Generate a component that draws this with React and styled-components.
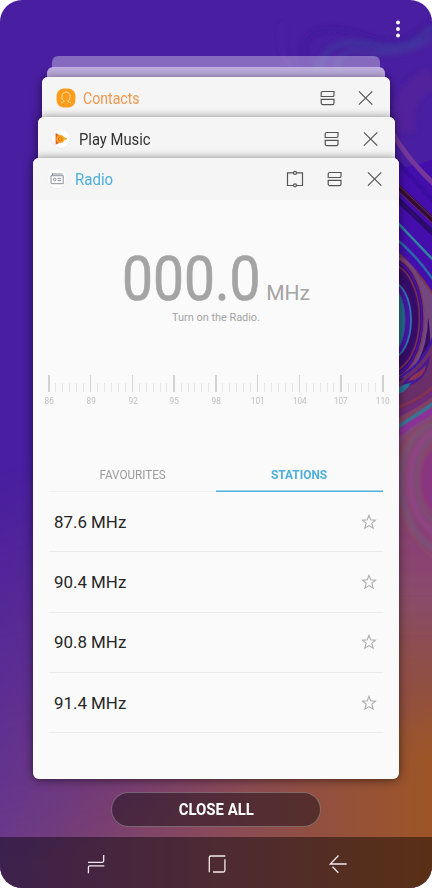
import React from "react";
import styled, { createGlobalStyle } from "styled-components";

const stations = ["87.6 MHz", "90.4 MHz", "90.8 MHz", "91.4 MHz"];
const marks = [86, 89, 92, 95, 98, 101, 104, 107, 110];
const ticks = Array.from({ length: 49 }, (_, i) => i % 6 === 0);

const SplitIcon = () => (
  <Icon viewBox="0 0 20 20">
    <path d="M4.700 3.500H16v3.400a1.600 1.600 0 0 1-1.600 1.600H3.200V5a1.500 1.500 0 0 1 1.500-1.500z" />
    <path d="M3.200 11.400H16v3.600a1.600 1.600 0 0 1-1.600 1.600H4.700a1.500 1.500 0 0 1-1.500-1.500z" />
  </Icon>
);

const CloseIcon = () => (
  <Icon viewBox="0 0 20 20">
    <path d="M2.900 3.300l13.400 13.400M16.300 3.300L2.900 16.700" />
  </Icon>
);

const PinIcon = () => (
  <Icon viewBox="0 0 20 20">
    <path d="M8.300 3.900H2.500v12.600h5.800M11.700 3.900h5.800v12.600h-5.800" />
    <circle cx="10" cy="3.900" r="1.500" />
    <circle cx="10" cy="16.300" r="1.500" />
  </Icon>
);

const StarIcon = () => (
  <Star viewBox="0 0 16 16">
    <path d="M8 1.400l1.700 4.400 4.700.3-3.600 3 1.300 5L8 11.600l-4.100 2.500 1.300-5-3.600-3 4.700-.3z" />
  </Star>
);

const ContactsLogo = () => (
  <Logo viewBox="0 0 20 20">
    <path d="M10 .5c7 0 9.500 2.500 9.500 9.500s-2.500 9.500-9.500 9.500S.5 17 .5 10 3 .5 10 .5z" fill="#fd9c1c" />
    <path
      d="M5 15c1-.9 2.300-1 3.500-1.600-1.700-1.100-2.600-2.900-2.600-4.900C5.900 5.700 7.600 4 10 4s4.100 1.700 4.100 4.500c0 2-.9 3.800-2.600 4.900 1.200.6 2.500.7 3.500 1.600"
      fill="none" stroke="#ffe6a0" strokeWidth=".9"
    />
  </Logo>
);

const MusicLogo = () => (
  <Logo viewBox="0 0 20 20">
    <circle cx="10" cy="10.400" r="9" fill="#dedede" />
    <circle cx="10" cy="10" r="9" fill="#fff" />
    <path d="M4.600 4L16 9.800 4.600 15.700z" fill="#e2572b" />
    <path d="M6 5l10 4.800-5 2.700z" fill="#f9b423" />
    <circle cx="9.200" cy="9.900" r="4" fill="#ffa51f" />
    <circle cx="9.200" cy="10.100" r="1.900" fill="none" stroke="#cc6a1a" strokeWidth=".8" />
  </Logo>
);

const RadioLogo = () => (
  <Logo viewBox="0 0 20 20">
    <circle cx="10" cy="10.500" r="9.400" fill="#dedede" />
    <circle cx="10" cy="10" r="9.400" fill="#fdfdfd" />
    <g fill="none" stroke="#8c90a0" strokeWidth="1">
      <path d="M4 14V6.700h12.200v8H4.800a.8.8 0 0 1-.8-.8M5.500 6.600V4M5 5h10.500" />
      <circle cx="7.700" cy="10.500" r="1.300" />
      <path d="M10.600 9.400h3.600M10.600 11.500h3.600" />
    </g>
  </Logo>
);

const Wallpaper = () => (
  <WallpaperSvg viewBox="0 0 432 888" preserveAspectRatio="none">
    <defs>
      <linearGradient id="warm" x1="0" x2="1" y1="0" y2="0">
        <stop offset="0" stopColor="#6d3c88" />
        <stop offset=".25" stopColor="#7b416e" />
        <stop offset=".5" stopColor="#894a5a" />
        <stop offset=".75" stopColor="#93503f" />
        <stop offset="1" stopColor="#9d5526" />
      </linearGradient>
      <linearGradient id="fade" gradientUnits="userSpaceOnUse" x1="60" y1="450" x2="190" y2="810">
        <stop offset="0" stopColor="#000" />
        <stop offset="1" stopColor="#fff" />
      </linearGradient>
      <mask id="fadeMask">
        <rect width="432" height="888" fill="url(#fade)" />
      </mask>
      <radialGradient id="pink" gradientUnits="userSpaceOnUse" cx="0" cy="0" r="1" gradientTransform="translate(425 530) scale(130 230)">
        <stop offset="0" stopColor="#8b4079" />
        <stop offset=".3" stopColor="#8b4c68" />
        <stop offset=".6" stopColor="#8e504c" stopOpacity=".75" />
        <stop offset="1" stopColor="#8e5048" stopOpacity="0" />
      </radialGradient>
      <linearGradient id="veil" x1="0" x2="0" y1="0" y2="1">
        <stop offset="0" stopColor="#874073" stopOpacity=".6" />
        <stop offset=".6" stopColor="#874073" stopOpacity=".5" />
        <stop offset="1" stopColor="#874a68" stopOpacity="0" />
      </linearGradient>
      <filter id="soft"><feGaussianBlur stdDeviation=".5" /></filter>
      <filter id="blend" x="-50%" width="200%"><feGaussianBlur stdDeviation="1.300" /></filter>
      <filter id="haze" x="-30%" y="-30%" width="160%" height="160%"><feGaussianBlur stdDeviation="2.500" /></filter>
    </defs>
    <rect width="432" height="888" fill="#491ea0" />
    <rect width="432" height="888" fill="url(#warm)" mask="url(#fadeMask)" />
    <g fill="none" filter="url(#haze)">
      <path d="M432 20C414 38 400 46 378 40S335 24 316 32s-12 26-8 38" stroke="#40189a" strokeWidth="3" />
      <path d="M432 27C416 45 398 51 376 46s-40-6-50 8-6 16-6 16" stroke="#40309f" strokeWidth="6" />
      <path d="M432 38c-20 15-50 17-70 14s-25 5-24 18" stroke="#46309f" strokeWidth="5" />
      <path d="M282 24c-2 25 2 34 10 46" stroke="#4f22a2" strokeWidth="3" />
      <path d="M432 78c-20 10-34 25-26 55" stroke="#51209b" strokeWidth="22" />
    </g>
    <path d="M396 170l36-10v245l-36 25z" fill="#440eac" />
    <rect x="290" y="300" width="142" height="470" fill="url(#pink)" />
    <g fill="none" filter="url(#blend)">
      <path d="M390 432l50-30v240h-50z" fill="url(#veil)" />
      <path d="M436 424c-20 5-35 28-35 57s14 58 35 70" stroke="#7b4f77" strokeWidth="6" />
      <path d="M436 420c-24 7-39 31-39 61s17 64 39 78" stroke="#8b5060" strokeWidth="1.500" />
      <path d="M436 431c-16 7-26 26-26 49s11 46 26 54" stroke="#8c4480" strokeWidth="7" />
      <path d="M436 436c-12 7-20 23-20 43s8 37 20 44" stroke="#7c4e76" strokeWidth="4" />
      <ellipse cx="439" cy="480" rx="18" ry="32" fill="#8a3580" />
    </g>
    <g fill="none" filter="url(#soft)">
      <path d="M390 128c10 20 27 40 44 56" stroke="#74389a" strokeWidth="5" />
      <path d="M396 160l38 42" stroke="#3809a0" strokeWidth="4" />
      <path d="M394 183l40 38" stroke="#321038" strokeWidth="5" />
      <path d="M394 181l40 38" stroke="#6c3040" strokeWidth="1" />
      <path d="M394 187l40 38" stroke="#6a2b48" strokeWidth="1" />
      <path d="M394 196l40 38" stroke="#2b0769" strokeWidth="5" />
      <path d="M394 219l40 42" stroke="#2e8fa3" strokeWidth="2.500" />
      <path d="M394 220l40 42" stroke="#3a5698" strokeWidth=".8" />
      <path d="M394 237c14 11 27 25 40 44" stroke="#2968a8" strokeWidth="2.500" />
      <path d="M394 250c14 11 27 26 40 46v70l-38 40z" fill="#361063" stroke="#77354f" strokeWidth="2.500" />
      <path d="M396 262c22 16 36 47 34 85l6-4v-42c-10-18-24-34-40-43z" fill="#744780" />
      <ellipse cx="391" cy="318" rx="37" ry="63" fill="#744780" />
      <ellipse cx="391" cy="318" rx="33" ry="60" fill="#3f1070" stroke="#7a3a58" strokeWidth="1.500" />
      <ellipse cx="391" cy="318" rx="31" ry="57" stroke="#4512a0" strokeWidth="2" />
      <ellipse cx="391" cy="318" rx="28.500" ry="53" stroke="#74334f" strokeWidth="1.500" />
      <ellipse cx="391" cy="318" rx="24" ry="46" stroke="#351068" strokeWidth="5" />
      <ellipse cx="391" cy="320" rx="20" ry="38" fill="#4413a2" stroke="#2d74ab" strokeWidth="1.800" />
      <ellipse cx="391" cy="320" rx="14" ry="33" fill="#246f8c" stroke="#38509c" strokeWidth="1" />
      <path d="M396 384c12-8 24-22 38-48v58l-38 22z" fill="#6b2f68" />
      <path d="M396 380c16-10 27-18 38-44" stroke="#3f18a0" strokeWidth="2.500" />
      <path d="M400 388c4-12 20-15 31-36-2 22-10 34-31 36z" fill="#461a90" stroke="#772c69" strokeWidth="1" />
      <path d="M408 381c6-9 12-8 18-16-1 8-6 15-18 16z" fill="#8c3352" />
      <path d="M396 391c5-7 10-7 15-8-4 6-7 10-15 11z" fill="#28749a" />
      <path d="M396 409c14-7 26-11 38-23" stroke="#873352" strokeWidth="2.500" />
      <path d="M396 416c14-7 26-14 38-23" stroke="#702c7a" strokeWidth="5" />
      <path d="M396 428c14-9 26-16 38-25" stroke="#3a7398" strokeWidth="3.500" />
      <path d="M396 435c14-11 26-17 38-25" stroke="#8b319a" strokeWidth="6" />
      <path d="M396 443c12-12 24-20 38-27" stroke="#82467c" strokeWidth="4" />
    </g>
  </WallpaperSvg>
);

const Header = ({ logo, title, color, size, pinned, inset, gap, stretch, height }) => (
  <CardHeader $height={height} $inset={inset}>
    {logo}
    <Title $color={color} $size={size} $stretch={stretch}>{title}</Title>
    <Actions $gap={gap}>
      {pinned && <PinIcon />}
      <SplitIcon />
      <CloseIcon />
    </Actions>
  </CardHeader>
);

const App = () => {
  return (
    <>
      <GlobalStyle />
      <Phone>
        <Wallpaper />
        <TopBar>
          <Menu viewBox="0 0 4 18">
            <circle cx="2" cy="2.500" r="1.950" />
            <circle cx="2" cy="9" r="1.950" />
            <circle cx="2" cy="15.500" r="1.950" />
          </Menu>
        </TopBar>
        <Stack>
          <Ghost $width={328} $height={11} $alpha={0.36} />
          <Ghost $width={338} $height={10} $alpha={0.68} />
          <Card $width={347.4} $height={46}>
            <Header logo={<ContactsLogo />} title="Contacts" color="#f0974e" size={16.6} stretch={0.85} inset={13.3} gap={18} height={41} />
          </Card>
          <Card $width={357} $height={46}>
            <Header logo={<MusicLogo />} title="Play Music" color="#333" size={17} stretch={0.87} inset={13.7} gap={19} height={42.4} />
          </Card>
          <Card $width={366} $height={621}>
            <Header logo={<RadioLogo />} title="Radio" color="#4fafdc" size={17.4} stretch={0.865} inset={14.4} gap={20} height={42.6} pinned />
            <Content>
              <Frequency>
                <Digits>000.0</Digits>
                <Unit>MHz</Unit>
              </Frequency>
              <Hint>Turn on the Radio.</Hint>
              <Ruler>
                {ticks.map((major, i) => <Tick key={i} $major={major} />)}
              </Ruler>
              <Marks>
                {marks.map((mark) => <Mark key={mark}><span>{mark}</span></Mark>)}
              </Marks>
              <Tabs>
                <Tab $stretch={0.86}><span>FAVOURITES</span></Tab>
                <Tab $stretch={0.875} $active><span>STATIONS</span></Tab>
              </Tabs>
              {stations.map((station) => (
                <Station key={station}>
                  <span>{station}</span>
                  <StarIcon />
                </Station>
              ))}
            </Content>
          </Card>
        </Stack>
        <CloseAll><span>CLOSE ALL</span></CloseAll>
        <NavBar>
          <NavIcon viewBox="0 0 20 20">
            <path d="M2 8.300h14.200a1.500 1.500 0 0 0 1.500-1.500V1M18.300 11.800H3.900a1.500 1.500 0 0 0-1.500 1.500v6" />
          </NavIcon>
          <NavIcon viewBox="0 0 20 20">
            <path d="M2.300 18.300V3.500a1.500 1.500 0 0 1 1.500-1.500h14.500M17.900 5.300v11.200a1.500 1.500 0 0 1-1.500 1.500H6" />
          </NavIcon>
          <NavIcon viewBox="0 0 20 20">
            <path d="M18.600 10H2.300l8.200-8.500M4.500 12.800l5.900 6" />
          </NavIcon>
        </NavBar>
      </Phone>
    </>
  );
};
export default App;

const GlobalStyle = createGlobalStyle`
  body {
    margin: 0;
    background: #fff;
    font-family: Roboto, "Noto Sans", sans-serif;
  }
`;

const Phone = styled.div`
  position: relative;
  isolation: isolate;
  display: flex;
  flex-direction: column;
  align-items: center;
  width: 432px;
  height: 888px;
  border-radius: 22px;
  overflow: hidden;
`;

const WallpaperSvg = styled.svg`
  position: absolute;
  inset: 0;
  z-index: -1;
  width: 100%;
  height: 100%;
`;

const TopBar = styled.header`
  display: flex;
  justify-content: flex-end;
  align-items: flex-start;
  box-sizing: border-box;
  width: 100%;
  height: 56px;
  padding: 19.5px 32px 0 0;
`;

const Menu = styled.svg`
  width: 4px;
  height: 18px;
  fill: #fff;
`;

const Stack = styled.main`
  display: flex;
  flex-direction: column;
  align-items: center;
`;

const Ghost = styled.div`
  width: ${({ $width }) => $width}px;
  height: ${({ $height }) => $height}px;
  border-radius: 6px 6px 0 0;
  background: rgba(245, 240, 250, ${({ $alpha }) => $alpha});
`;

const Card = styled.section`
  box-sizing: border-box;
  width: ${({ $width }) => $width}px;
  height: ${({ $height }) => $height}px;
  border-radius: 6px;
  background: #fafafa;
  box-shadow: 0 1px 10px rgba(0, 0, 0, 0.55);
  overflow: hidden;
  & + & {
    margin-top: -5.7px;
  }
`;

const CardHeader = styled.div`
  display: flex;
  align-items: center;
  box-sizing: border-box;
  height: ${({ $height }) => $height}px;
  padding: 0 ${({ $inset }) => $inset}px;
  background: #f5f5f5;
  box-shadow: 0 6px #f5f5f5;
  ${Card}:last-child & {
    box-shadow: none;
  }
`;

const Logo = styled.svg`
  flex: none;
  width: 20px;
  height: 20px;
`;

const Title = styled.h2`
  margin: 1px 0 0 7.5px;
  font-size: ${({ $size }) => $size}px;
  font-weight: 400;
  color: ${({ $color }) => $color};
  white-space: nowrap;
  transform: scaleX(${({ $stretch }) => $stretch});
  transform-origin: left;
`;

const Actions = styled.div`
  display: flex;
  gap: ${({ $gap }) => $gap}px;
  margin-left: auto;
`;

const Icon = styled.svg`
  width: 20px;
  height: 20px;
  fill: none;
  stroke: #555;
  stroke-width: 1.2;
`;

const Content = styled.div`
  padding: 48.4px 16px 0;
`;

const Frequency = styled.div`
  display: flex;
  align-items: baseline;
  justify-content: center;
  height: 62px;
  color: #a4a4a4;
`;

const Digits = styled.span`
  width: 144px;
  font-size: 62px;
  line-height: 60px;
  -webkit-text-stroke: 0.7px #a4a4a4;
  transform: scaleX(0.89);
  transform-origin: left;
`;

const Unit = styled.span`
  font-size: 21px;
`;

const Hint = styled.p`
  margin: 0;
  font-size: 10.9px;
  line-height: 14px;
  text-align: center;
  color: #a4a4a4;
`;

const Ruler = styled.div`
  display: flex;
  align-items: flex-end;
  justify-content: space-between;
  height: 17px;
  margin: 50.4px -1px 0;
`;

const Tick = styled.span`
  width: ${({ $major }) => ($major ? 1.5 : 1)}px;
  height: ${({ $major }) => ($major ? 17 : 9)}px;
  background: ${({ $major }) => ($major ? "#d2d2d2" : "#e6e6e6")};
`;

const Marks = styled.div`
  display: flex;
  justify-content: space-between;
  height: 12px;
  margin-top: 3px;
  font-size: 9.2px;
  line-height: 11px;
  color: #c0c0c0;
`;

const Mark = styled.span`
  display: flex;
  justify-content: center;
  width: 1px;
  span {
    transform: scaleX(0.9);
  }
`;

const Tabs = styled.div`
  display: flex;
  height: 33.5px;
  margin-top: 51.7px;
`;

const Tab = styled.div`
  flex: 1;
  box-sizing: border-box;
  border-bottom: 1px solid #f0f0f0;
  box-shadow: ${({ $active }) => ($active ? "inset 0 -0.5px #4fafdc" : "none")};
  border-color: ${({ $active }) => ($active ? "#4fafdc" : "#f0f0f0")};
  font-size: 13.6px;
  font-weight: ${({ $active }) => ($active ? 700 : 400)};
  line-height: 31px;
  text-align: center;
  color: ${({ $active }) => ($active ? "#4fafdc" : "#9c9c9c")};
  span {
    display: inline-block;
    transform: scaleX(${({ $stretch }) => $stretch});
  }
`;

const Station = styled.div`
  display: flex;
  align-items: center;
  justify-content: space-between;
  box-sizing: border-box;
  height: 60.25px;
  padding: 0 6.5px 0 5px;
  border-bottom: 1px solid #ebebeb;
  font-size: 16.9px;
  color: #262626;
`;

const Star = styled.svg`
  width: 16px;
  height: 16px;
  fill: none;
  stroke: #ababab;
  stroke-width: 1.1;
`;

const CloseAll = styled.button`
  flex: none;
  width: 210px;
  height: 35px;
  margin-top: 13px;
  padding: 1px 0 0;
  border: 1px solid rgba(255, 255, 255, 0.28);
  border-radius: 18px;
  background: rgba(20, 10, 20, 0.47);
  color: #fff;
  font: 700 16.4px Roboto, sans-serif;
  span {
    display: inline-block;
    transform: scaleX(0.91);
  }
`;

const NavBar = styled.nav`
  display: flex;
  align-items: center;
  justify-content: center;
  gap: 101px;
  box-sizing: border-box;
  width: 100%;
  height: 51px;
  margin-top: auto;
  padding-top: 2px;
  padding-left: 2px;
  background: rgba(0, 0, 0, 0.43);
`;

const NavIcon = styled.svg`
  width: 20px;
  height: 20px;
  fill: none;
  stroke: #f3e9ee;
  stroke-width: 1.3;
`;
